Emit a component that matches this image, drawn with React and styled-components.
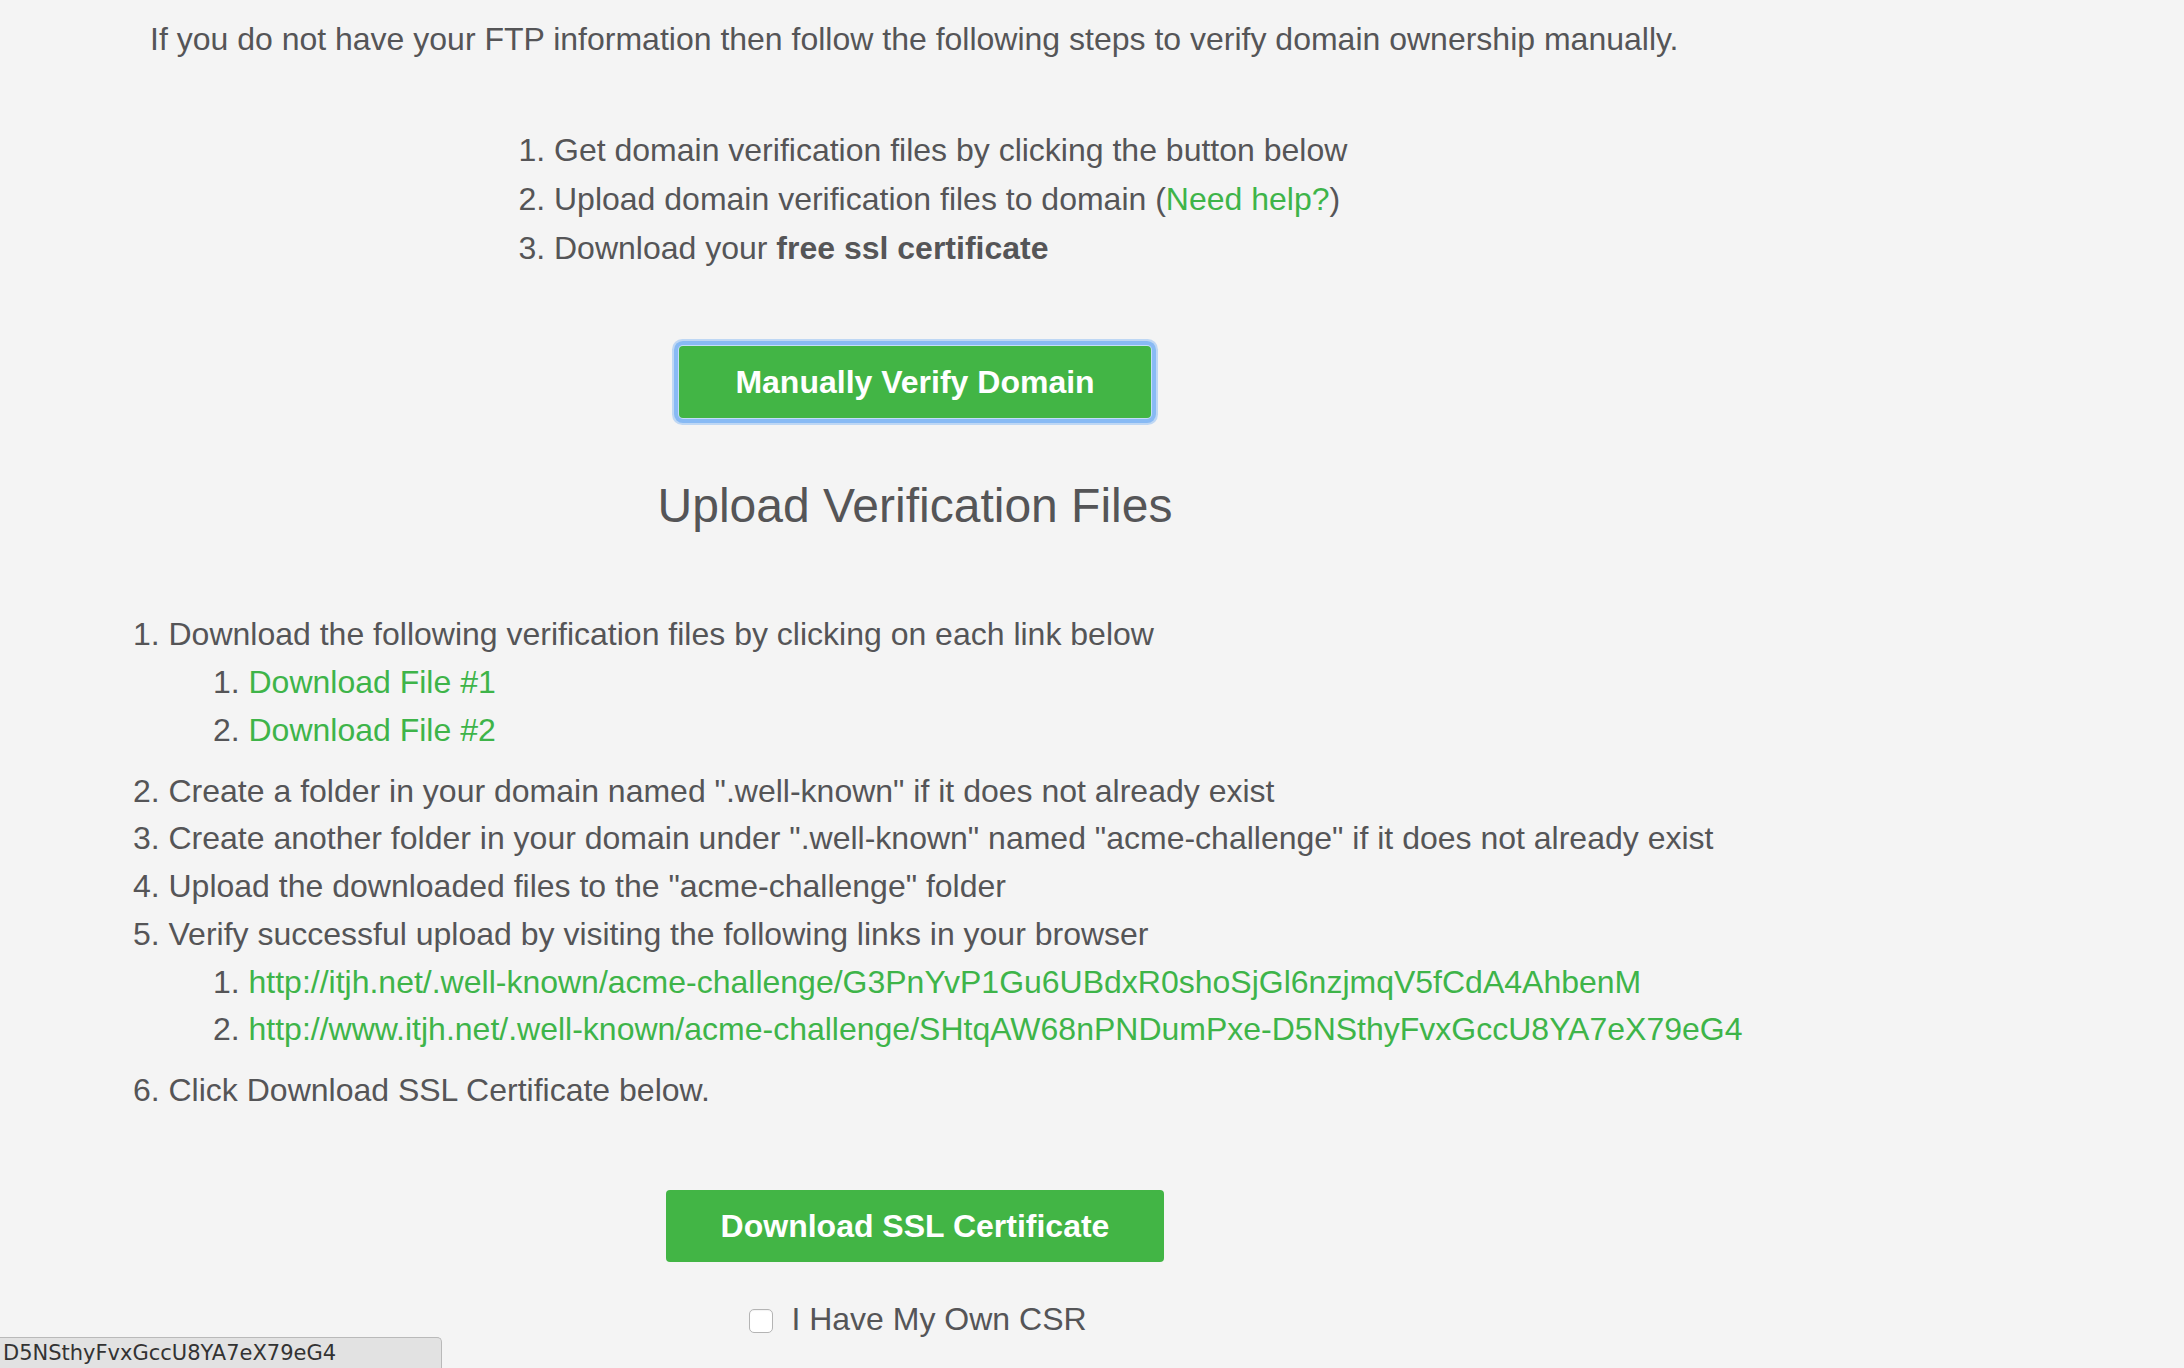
import React from "react";
import styled, { createGlobalStyle } from "styled-components";

const Global = createGlobalStyle`
  html, body {
    margin: 0;
    padding: 0;
    background: #f4f4f4;
    min-height: 100%;
  }
  body {
    font-family: "Liberation Sans", Arial, Helvetica, sans-serif;
    color: #555557;
  }
`;

const Page = styled.div`
  min-height: 1368px;
  box-sizing: border-box;
  padding: 15px 0 0 130px;
`;

const Container = styled.div`
  width: 1570px;
  font-size: 32px;
  line-height: 48px;
`;

const Intro = styled.p`
  margin: 0 0 63px 20px;
  white-space: nowrap;
`;

const StepList = styled.ol`
  margin: 0 0 74px 384px;
  padding-left: 40px;
  line-height: 48.75px;
  white-space: nowrap;
`;

const Item = styled.li``;

const Bold = styled.strong`
  font-weight: 700;
`;

const Link = styled.a`
  color: #3eb449;
  text-decoration: none;
  cursor: pointer;
`;

const Center = styled.div`
  display: flex;
  justify-content: center;
  margin-bottom: ${(p) => p.$mb || 0}px;
`;

const Button = styled.button`
  height: 72px;
  padding: 0 ${(p) => p.$px}px;
  border: none;
  border-radius: 4px;
  background: #42b545;
  color: #ffffff;
  font-family: "Liberation Sans", Arial, Helvetica, sans-serif;
  font-weight: 700;
  font-size: 32px;
  line-height: 72px;
  cursor: pointer;
  box-shadow: ${(p) =>
    p.$focused
      ? "0 0 0 1px #c4ddf9, 0 0 0 5px #88baf4, 0 0 0 7px rgba(136, 186, 244, 0.5)"
      : "none"};
`;

const Heading = styled.h2`
  margin: 0 0 76px;
  text-align: center;
  font-size: 48px;
  line-height: 58px;
  font-weight: 400;
  color: #555557;
`;

const FileList = styled.ol`
  margin: 0 0 75px;
  padding-left: 38.5px;
  line-height: 47.75px;
  white-space: nowrap;
`;

const SubList = styled.ol`
  margin: 0 0 13px;
  padding-left: 80px;
`;

const CheckRow = styled.label`
  display: flex;
  align-items: center;
  justify-content: center;
  gap: 18px;
  padding-left: 6px;
  line-height: 48px;
  font-size: 32px;
  color: #555557;
`;

const Box = styled.span`
  width: 22px;
  height: 22px;
  border: 1px solid #b4b4b4;
  border-radius: 5px;
  background: #ffffff;
  margin-top: 4px;
  box-shadow: inset 0 1px 1px rgba(0, 0, 0, 0.05);
`;

const StatusBar = styled.div`
  position: fixed;
  left: 0;
  bottom: 0;
  width: 442px;
  height: 31px;
  box-sizing: border-box;
  background: #e2e2e2;
  border-top: 1px solid #b9b9b9;
  border-right: 1px solid #b9b9b9;
  border-top-right-radius: 5px;
  padding-left: 3px;
  font-family: "DejaVu Sans", Verdana, sans-serif;
  font-size: 21px;
  line-height: 31px;
  color: #333333;
  white-space: nowrap;
  overflow: hidden;
`;

export default function App() {
  return (
    <>
      <Global />
      <Page>
        <Container>
          <Intro>
            If you do not have your FTP information then follow the following
            steps to verify domain ownership manually.
          </Intro>
          <StepList>
            <Item>Get domain verification files by clicking the button below</Item>
            <Item>
              Upload domain verification files to domain (<Link>Need help?</Link>)
            </Item>
            <Item>
              Download your <Bold>free ssl certificate</Bold>
            </Item>
          </StepList>
          <Center $mb={59}>
            <Button $px={56} $focused>
              Manually Verify Domain
            </Button>
          </Center>
          <Heading>Upload Verification Files</Heading>
          <FileList>
            <Item>
              Download the following verification files by clicking on each link below
              <SubList>
                <Item>
                  <Link>Download File #1</Link>
                </Item>
                <Item>
                  <Link>Download File #2</Link>
                </Item>
              </SubList>
            </Item>
            <Item>
              Create a folder in your domain named ".well-known" if it does not already exist
            </Item>
            <Item>
              Create another folder in your domain under ".well-known" named
              "acme-challenge" if it does not already exist
            </Item>
            <Item>Upload the downloaded files to the "acme-challenge" folder</Item>
            <Item>
              Verify successful upload by visiting the following links in your browser
              <SubList>
                <Item>
                  <Link>
                    http://itjh.net/.well-known/acme-challenge/G3PnYvP1Gu6UBdxR0shoSjGl6nzjmqV5fCdA4AhbenM
                  </Link>
                </Item>
                <Item>
                  <Link>
                    http://www.itjh.net/.well-known/acme-challenge/SHtqAW68nPNDumPxe-D5NSthyFvxGccU8YA7eX79eG4
                  </Link>
                </Item>
              </SubList>
            </Item>
            <Item>Click Download SSL Certificate below.</Item>
          </FileList>
          <Center $mb={33}>
            <Button $px={55}>Download SSL Certificate</Button>
          </Center>
          <CheckRow>
            <Box />
            I Have My Own CSR
          </CheckRow>
        </Container>
      </Page>
      <StatusBar>D5NSthyFvxGccU8YA7eX79eG4</StatusBar>
    </>
  );
}
